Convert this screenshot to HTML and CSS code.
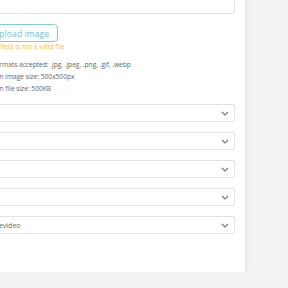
FILE: index.html
```html
<!DOCTYPE html>
<html lang="en">
<head>
  <meta charset="UTF-8">
  <title>Upload Form</title>
<link rel="stylesheet" href="styles.css">
</head>
<body>
  <div class="card">
    <textarea class="notes"></textarea>

    <div class="upload">
      <button class="upload-btn">Upload image</button>
      <p class="error">This field is not a valid file</p>
      <p class="hint">Formats accepted: .jpg, .jpeg, .png, .gif, .webp</p>
      <p class="hint">Min image size: 500x500px</p>
      <p class="hint">Min file size: 500KB</p>
    </div>

    <!-- Select fields -->
    <div class="selects">
      <div class="select"><span></span><svg width="8" height="5" viewBox="0 0 8 5"><path d="M1 1l3 3 3-3" fill="none" stroke="#777" stroke-width="1.1"/></svg></div>
      <div class="select"><span></span><svg width="8" height="5" viewBox="0 0 8 5"><path d="M1 1l3 3 3-3" fill="none" stroke="#777" stroke-width="1.1"/></svg></div>
      <div class="select"><span></span><svg width="8" height="5" viewBox="0 0 8 5"><path d="M1 1l3 3 3-3" fill="none" stroke="#777" stroke-width="1.1"/></svg></div>
      <div class="select"><span></span><svg width="8" height="5" viewBox="0 0 8 5"><path d="M1 1l3 3 3-3" fill="none" stroke="#777" stroke-width="1.1"/></svg></div>
      <div class="select"><span>Livevideo</span><svg width="8" height="5" viewBox="0 0 8 5"><path d="M1 1l3 3 3-3" fill="none" stroke="#777" stroke-width="1.1"/></svg></div>
    </div>
  </div>
</body>
</html>
```

FILE: styles.css
```css
body {
  font-family: 'Open Sans', 'DejaVu Sans', sans-serif;
  background: #f3f3f3;
  margin: 0;
  overflow: hidden;
}

.card {
  background: #ffffff;
  width: 305px;
  margin: -40px 0 0 -60px;
  padding: 0 10px 38px 52px;
  box-sizing: border-box;
  box-shadow: 0 2px 8px rgba(0,0,0,0.08);
}

.notes {
  display: block;
  width: 100%;
  height: 54px;
  box-sizing: border-box;
  border: 1px solid #e2e2e2;
  border-radius: 3px;
  resize: none;
  margin: 0;
}

.upload {
  padding-top: 10px;
}

.upload-btn {
  display: block;
  height: 18px;
  padding: 0 8px 0 12px;
  background: #fff;
  border: 1px solid #7ccbe3;
  border-radius: 4px;
  color: #6cc3de;
  font-family: inherit;
  font-size: 8.5px;
  letter-spacing: 0.1px;
  margin-left: -12px;
}

p {
  margin: 0;
  font-size: 6.6px;
  line-height: 12px;
}

.error {
  color: #f3c63f;
  line-height: 10px;
  margin-left: -6px;
  margin-bottom: 7px;
}

.hint {
  color: #666666;
}

.selects {
  display: flex;
  flex-direction: column;
  gap: 10px;
  margin-top: 9px;
}

.select {
  display: flex;
  align-items: center;
  justify-content: space-between;
  height: 18px;
  border: 1px solid #e3e3e3;
  border-radius: 2px;
  box-sizing: border-box;
  padding: 0 5px 0 0;
  font-size: 7px;
  color: #666;
}

.select span {
  margin-left: -3px;
}
```
